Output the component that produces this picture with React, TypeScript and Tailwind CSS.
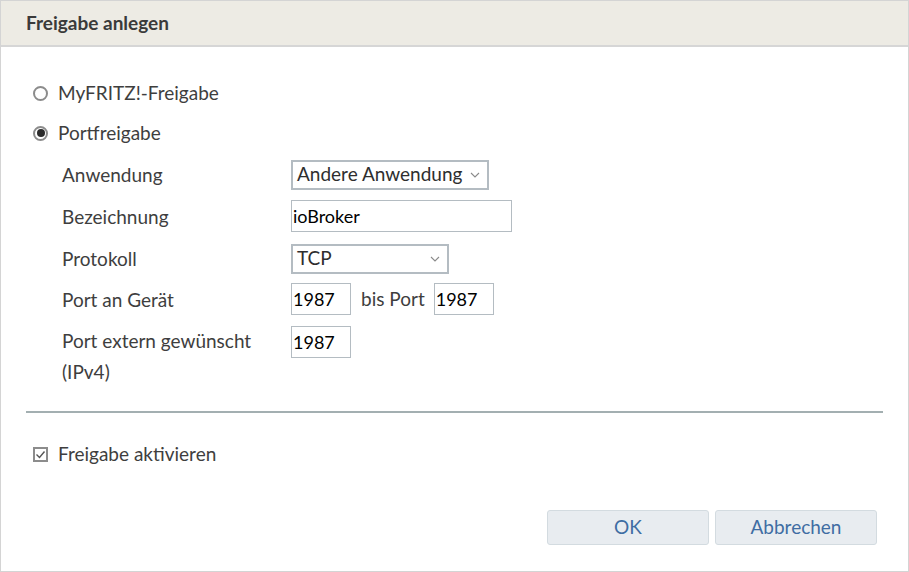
import React from 'react'

const font = { fontFamily: 'Lato, "Open Sans", sans-serif' }

function Chevron() {
  return (
    <svg width="10" height="6" viewBox="0 0 10 6" className="text-[#8a8a8a]">
      <path d="M1 1l4 4 4-4" fill="none" stroke="currentColor" strokeWidth="1.1" />
    </svg>
  )
}

function Row({ label, children, tall, className = '' }: { label: React.ReactNode; children: React.ReactNode; tall?: boolean; className?: string }) {
  return (
    <div className={`flex ${tall ? 'items-start' : 'items-center'} ${className}`}>
      <div className="w-[229px] shrink-0 leading-[31px]">{label}</div>
      {children}
    </div>
  )
}

export default function App() {
  return (
    <div
      className="flex h-[572px] w-[909px] flex-col border border-[#d4d4d4] bg-white text-[19px] text-[#3e3e3e]"
      style={font}
    >
      <div className="flex h-[46px] shrink-0 items-center border-b-2 border-[#d6d6d6] bg-[#edebe4] px-[25px]">
        <h1 className="text-[19px] font-bold text-[#3a3a3a]">Freigabe anlegen</h1>
      </div>

      <div className="flex flex-1 flex-col px-[25px] pt-[34px]">
        <label className="flex h-[24px] items-center gap-[10px] pl-[7px]">
          <span className="h-[15px] w-[15px] rounded-full border-2 border-[#8c8c8c]" />
          <span>MyFRITZ!-Freigabe</span>
        </label>
        <label className="mt-[16px] flex h-[24px] items-center gap-[10px] pl-[7px]">
          <span className="flex h-[15px] w-[15px] items-center justify-center rounded-full border-2 border-[#8c8c8c]">
            <span className="h-[8px] w-[8px] rounded-full bg-[#2b2b2b]" />
          </span>
          <span>Portfreigabe</span>
        </label>

        <div className="mt-[14px] flex flex-col pl-[36px]">
          <Row label="Anwendung">
            <div className="flex h-[30px] w-[198px] items-center justify-between border-2 border-[#b4bcc2] pl-[4px] pr-[7px] text-[#2e2e2e]">
              <span>Andere Anwendung</span>
              <Chevron />
            </div>
          </Row>
          <Row label="Bezeichnung" className="mt-[10px]">
            <div className="flex h-[32px] w-[221px] items-center border border-[#b4bcc2] px-[1px] text-[18px] text-black">
              ioBroker
            </div>
          </Row>
          <Row label="Protokoll" className="mt-[11px]">
            <div className="flex h-[30px] w-[158px] items-center justify-between border-2 border-[#b4bcc2] pl-[4px] pr-[7px] text-[#2e2e2e]">
              <span>TCP</span>
              <Chevron />
            </div>
          </Row>
          <Row label="Port an Gerät" className="mt-[9px]">
            <div className="flex items-center">
              <div className="flex h-[32px] w-[60px] items-center border border-[#b4bcc2] px-[1px] text-[18px] text-black">1987</div>
              <span className="ml-[10px] mr-[9px]">bis Port</span>
              <div className="flex h-[32px] w-[60px] items-center border border-[#b4bcc2] px-[1px] text-[18px] text-black">1987</div>
            </div>
          </Row>
          <Row
            tall
            className="mt-[10px]"
            label={
              <>
                Port extern gewünscht
                <br />
                (IPv4)
              </>
            }
          >
            <div className="mt-[1px] flex h-[32px] w-[60px] items-center border border-[#b4bcc2] px-[1px] text-[18px] text-black">1987</div>
          </Row>
        </div>

        <div className="mt-[24px] h-[2px] w-[857px] bg-[#a3afb1]" />

        <label className="mt-[29px] flex h-[24px] items-center gap-[10px] pl-[7px]">
          <span className="flex h-[15px] w-[15px] items-center justify-center border-2 border-[#8c8c8c]">
            <svg width="11" height="9" viewBox="0 0 11 9">
              <path d="M1.5 4.5l3 3 5-6" fill="none" stroke="#555" strokeWidth="1.4" />
            </svg>
          </span>
          <span>Freigabe aktivieren</span>
        </label>

        <div className="mt-auto mb-[26px] flex justify-end gap-[6px] pr-[6px]">
          <button className="h-[35px] w-[162px] rounded-[3px] border border-[#d3dbe0] bg-[#e8ecf0] text-[19px] text-[#3f6da3]">
            OK
          </button>
          <button className="h-[35px] w-[162px] rounded-[3px] border border-[#d3dbe0] bg-[#e8ecf0] text-[19px] text-[#3f6da3]">
            Abbrechen
          </button>
        </div>
      </div>
    </div>
  )
}
